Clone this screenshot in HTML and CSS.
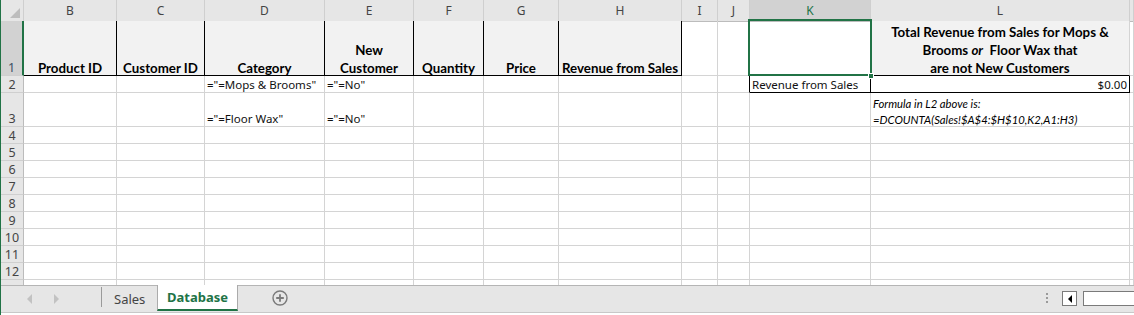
FILE: index.html
```html
<!DOCTYPE html>
<html>
<head>
<meta charset="utf-8">
<link rel="stylesheet" href="styles.css">
</head>
<body>
<div class="app">
  <div class="sheet">
    <div class="row hdr">
      <div class="c corner"><span class="tri"></span></div>
      <div class="c">B</div><div class="c">C</div><div class="c">D</div><div class="c">E</div><div class="c">F</div><div class="c">G</div><div class="c">H</div><div class="c">I</div><div class="c">J</div><div class="c sel">K</div><div class="c">L</div><div class="c"></div>
    </div>
    <div class="row r1">
      <div class="c rh selrow">1</div>
      <div class="c th"><span>Product ID</span></div>
      <div class="c th"><span>Customer ID</span></div>
      <div class="c th"><span>Category</span></div>
      <div class="c th"><span>New<br>Customer</span></div>
      <div class="c th"><span>Quantity</span></div>
      <div class="c th"><span>Price</span></div>
      <div class="c th"><span>Revenue from Sales</span></div>
      <div class="c"></div>
      <div class="c"></div>
      <div class="c active bb"><span class="handle"></span></div>
      <div class="c th2"><span>Total Revenue from Sales for Mops &amp;<br>Brooms <i>or</i>&nbsp; Floor Wax that<br>are not New Customers</span></div>
      <div class="c"></div>
    </div>
    <div class="row r2">
      <div class="c rh">2</div>
      <div class="c"></div><div class="c"></div>
      <div class="c txt">="=Mops &amp; Brooms"</div>
      <div class="c txt">="=No"</div>
      <div class="c"></div><div class="c"></div><div class="c"></div><div class="c"></div>
      <div class="c br"></div>
      <div class="c txt br bb">Revenue from Sales</div>
      <div class="c txt num br bb">$0.00</div>
      <div class="c"></div>
    </div>
    <div class="row r3">
      <div class="c rh">3</div>
      <div class="c"></div><div class="c"></div>
      <div class="c txt">="=Floor Wax"</div>
      <div class="c txt">="=No"</div>
      <div class="c"></div><div class="c"></div><div class="c"></div><div class="c"></div><div class="c"></div><div class="c"></div>
      <div class="c note"><span>Formula in L2 above is:<br>=DCOUNTA(Sales!$A$4:$H$10,K2,A1:H3)</span></div>
      <div class="c"></div>
    </div>
    <div class="row"><div class="c rh">4</div><div class="c"></div><div class="c"></div><div class="c"></div><div class="c"></div><div class="c"></div><div class="c"></div><div class="c"></div><div class="c"></div><div class="c"></div><div class="c"></div><div class="c"></div><div class="c"></div></div>
    <div class="row"><div class="c rh">5</div><div class="c"></div><div class="c"></div><div class="c"></div><div class="c"></div><div class="c"></div><div class="c"></div><div class="c"></div><div class="c"></div><div class="c"></div><div class="c"></div><div class="c"></div><div class="c"></div></div>
    <div class="row"><div class="c rh">6</div><div class="c"></div><div class="c"></div><div class="c"></div><div class="c"></div><div class="c"></div><div class="c"></div><div class="c"></div><div class="c"></div><div class="c"></div><div class="c"></div><div class="c"></div><div class="c"></div></div>
    <div class="row"><div class="c rh">7</div><div class="c"></div><div class="c"></div><div class="c"></div><div class="c"></div><div class="c"></div><div class="c"></div><div class="c"></div><div class="c"></div><div class="c"></div><div class="c"></div><div class="c"></div><div class="c"></div></div>
    <div class="row"><div class="c rh">8</div><div class="c"></div><div class="c"></div><div class="c"></div><div class="c"></div><div class="c"></div><div class="c"></div><div class="c"></div><div class="c"></div><div class="c"></div><div class="c"></div><div class="c"></div><div class="c"></div></div>
    <div class="row"><div class="c rh">9</div><div class="c"></div><div class="c"></div><div class="c"></div><div class="c"></div><div class="c"></div><div class="c"></div><div class="c"></div><div class="c"></div><div class="c"></div><div class="c"></div><div class="c"></div><div class="c"></div></div>
    <div class="row"><div class="c rh">10</div><div class="c"></div><div class="c"></div><div class="c"></div><div class="c"></div><div class="c"></div><div class="c"></div><div class="c"></div><div class="c"></div><div class="c"></div><div class="c"></div><div class="c"></div><div class="c"></div></div>
    <div class="row"><div class="c rh">11</div><div class="c"></div><div class="c"></div><div class="c"></div><div class="c"></div><div class="c"></div><div class="c"></div><div class="c"></div><div class="c"></div><div class="c"></div><div class="c"></div><div class="c"></div><div class="c"></div></div>
    <div class="row"><div class="c rh">12</div><div class="c"></div><div class="c"></div><div class="c"></div><div class="c"></div><div class="c"></div><div class="c"></div><div class="c"></div><div class="c"></div><div class="c"></div><div class="c"></div><div class="c"></div><div class="c"></div></div>
    <div class="row"><div class="c rh"></div><div class="c"></div><div class="c"></div><div class="c"></div><div class="c"></div><div class="c"></div><div class="c"></div><div class="c"></div><div class="c"></div><div class="c"></div><div class="c"></div><div class="c"></div><div class="c"></div></div>
  </div>
  <div class="tabbar">
    <div class="nav">
      <span class="arrow left"></span>
      <span class="arrow right"></span>
    </div>
    <div class="sep"></div>
    <div class="tab">Sales</div>
    <div class="tab active-tab">Database</div>
    <div class="add">
      <svg width="16" height="16" viewBox="0 0 16 16"><circle cx="8" cy="8" r="7" fill="none" stroke="#7a7a7a" stroke-width="1.4"/><path d="M8 4.2v7.6M4.2 8h7.6" stroke="#7a7a7a" stroke-width="1.8"/></svg>
    </div>
    <div class="spacer"></div>
    <div class="dots"><span></span><span></span><span></span></div>
    <div class="scrollbtn"><span class="sl"></span></div>
    <div class="scrolltrack"></div>
  </div>
</div>
</body>
</html>
```
FILE: styles.css
```css
* { box-sizing: border-box; }
html, body { margin: 0; padding: 0; background: #fff; }
body { width: 1134px; height: 315px; overflow: hidden; }
.app {
  width: 1134px;
  height: 315px;
  border-left: 1px solid #217346;
  display: flex;
  flex-direction: column;
  background: #fff;
}
.sheet {
  height: 285px;
  overflow: hidden;
  display: flex;
  flex-direction: column;
}
.row {
  display: grid;
  grid-template-columns: 23px 93px 88px 120px 89px 70px 75px 123px 36px 32px 121px 259px 1fr;
  height: 17px;
  flex: none;
}
.c {
  border-right: 1px solid #d4d4d4;
  border-bottom: 1px solid #d4d4d4;
  min-width: 0;
  position: relative;
  white-space: nowrap;
  overflow: visible;
}
.hdr { height: 21px; }
.hdr .c {
  background: #e6e6e6;
  border-right: 1px solid #cfcfcf;
  border-bottom: 1px solid #bcbcbc;
  font: 12px "Noto Sans", sans-serif;
  color: #444;
  display: flex;
  align-items: center;
  justify-content: center;
  line-height: 20px;
  padding-top: 1px;
}
.hdr .c.sel { background: #d2d2d2; color: #217346; }
.corner .tri {
  position: absolute;
  right: 3px;
  bottom: 3px;
  width: 0;
  height: 0;
  border-left: 10px solid transparent;
  border-bottom: 10px solid #bdbdbd;
}
.rh {
  background: #e6e6e6;
  border-right: 1px solid #bcbcbc;
  border-bottom: 1px solid #cfcfcf;
  font: 12.5px "Noto Sans", sans-serif;
  color: #444;
  display: flex;
  align-items: flex-end;
  justify-content: center;
  line-height: 15px;
}
.rh.selrow {
  background: #d2d2d2;
  border-right: 2px solid #217346;
  color: #3b4f63;
}
.r1 { height: 55px; }
.r3 { height: 34px; }
.th, .th2 {
  background: #f2f2f2;
  font: bold 13.3px "Lato", sans-serif;
  color: #000;
  display: flex;
  align-items: flex-end;
  justify-content: center;
  text-align: center;
  line-height: 18px;
}
.th {
  border-right: 1px solid #000;
  border-bottom: 1px solid #000;
}
.th2 { border-bottom: 1px solid #000; }
.th span, .th2 span { display: block; margin-bottom: -2px; }
.th2 i { font-style: italic; }
.br { border-right: 1px solid #000; }
.bb { border-bottom: 1px solid #000; }
.active::after {
  content: "";
  position: absolute;
  top: -2px;
  left: -2px;
  right: -2px;
  bottom: -1px;
  border: 2px solid #217346;
  z-index: 2;
}
.handle {
  position: absolute;
  right: -4px;
  bottom: -4px;
  width: 6px;
  height: 6px;
  background: #217346;
  border: 1px solid #fff;
  z-index: 3;
}
.txt {
  font: 11.5px "Noto Sans", sans-serif;
  color: #111;
  display: flex;
  align-items: flex-end;
  padding-left: 2px;
  line-height: 15px;
}
.num { justify-content: flex-end; padding-right: 2px; }
.note {
  font: italic 11.3px "Lato", sans-serif;
  color: #000;
  display: flex;
  align-items: flex-end;
  padding-left: 2px;
  line-height: 16px;
}
.note span { display: block; margin-bottom: -2px; }
.tabbar {
  height: 28px;
  flex: none;
  background: #e6e6e6;
  border-top: 1px solid #b5b5b5;
  border-bottom: 1px solid #c8c8c8;
  display: flex;
  align-items: stretch;
  font: 13px "Noto Sans", sans-serif;
}
.nav {
  width: 100px;
  display: flex;
  align-items: center;
  padding-left: 26px;
  gap: 22px;
}
.arrow {
  width: 0;
  height: 0;
  border-top: 5px solid transparent;
  border-bottom: 5px solid transparent;
}
.arrow.left { border-right: 5px solid #c2c2c2; }
.arrow.right { border-left: 5px solid #c2c2c2; }
.sep {
  width: 1px;
  margin: 1px 0 5px;
  background: #9a9a9a;
}
.tab {
  padding: 0 12px 0 12px;
  display: flex;
  align-items: center;
  color: #444;
  width: 55px;
  height: 25px;
}
.active-tab {
  width: 81px;
  background: #fff;
  color: #217346;
  font-weight: bold;
  border-left: 1px solid #ababab;
  border-right: 1px solid #ababab;
  border-bottom: 2px solid #217346;
  justify-content: center;
  padding: 0;
  margin-top: -1px;
  height: 26px;
}
.add {
  margin-left: 34px;
  display: flex;
  align-items: center;
  padding-bottom: 3px;
}
.spacer { flex: 1; }
.dots {
  display: flex;
  flex-direction: column;
  justify-content: center;
  gap: 2px;
  padding-bottom: 3px;
  margin-right: 14px;
}
.dots span { width: 2px; height: 2px; background: #9a9a9a; display: block; }
.scrollbtn {
  width: 15px;
  height: 15px;
  margin-top: 5px;
  border: 1px solid #7a7a7a;
  background: #fff;
  display: flex;
  align-items: center;
  justify-content: center;
}
.sl {
  width: 0;
  height: 0;
  border-top: 4px solid transparent;
  border-bottom: 4px solid transparent;
  border-right: 4px solid #000;
}
.scrolltrack {
  width: 51px;
  height: 15px;
  margin-top: 5px;
  margin-left: 6px;
  border: 1px solid #7a7a7a;
  border-right: none;
  background: #fff;
}
```
